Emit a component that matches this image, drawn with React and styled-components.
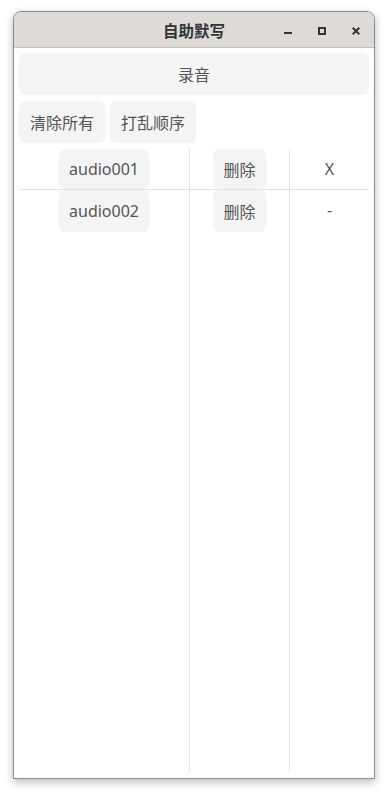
import React from "react"
import styled, { createGlobalStyle } from "styled-components"

const GlobalStyle = createGlobalStyle`
  html, body {
    margin: 0;
    padding: 0;
    background: #ffffff;
  }
  body {
    font-family: "Noto Sans", "Noto Sans CJK SC", sans-serif;
  }
`

const Desktop = styled.div`
  padding: 11px 0 0 13px;
  height: 796px;
  box-sizing: border-box;
`

const Window = styled.div`
  width: 362px;
  height: 768px;
  box-sizing: border-box;
  display: flex;
  flex-direction: column;
  background: #ffffff;
  border: 1px solid #8c8c8c;
  border-radius: 8px 8px 0 0;
  box-shadow: 0 3px 9px rgba(0, 0, 0, 0.28);
  overflow: hidden;
`

const TitleBar = styled.div`
  position: relative;
  height: 35px;
  flex-shrink: 0;
  display: flex;
  align-items: center;
  justify-content: center;
  background: #dedbd7;
  border-bottom: 1px solid #c4bfba;
`

const Title = styled.div`
  font-family: "Noto Sans CJK SC", "Noto Sans", sans-serif;
  font-weight: 700;
  font-size: 15.5px;
  color: #2e3436;
`

const Controls = styled.div`
  position: absolute;
  right: 14px;
  top: 1px;
  height: 100%;
  display: flex;
  align-items: center;
  gap: 26px;
`

const ControlIcon = styled.svg`
  width: 8px;
  height: 8px;
  display: block;
  color: #2e3436;
`

const Content = styled.div`
  flex: 1;
  display: flex;
  flex-direction: column;
  gap: 6px;
  padding: 5px;
  min-height: 0;
`

const Button = styled.button`
  font-family: "Noto Sans", "Noto Sans CJK SC", sans-serif;
  font-size: 16px;
  color: #555555;
  background: #f4f4f4;
  border: none;
  border-radius: 6px;
  height: ${props => props.$height || 42}px;
  padding: 0 ${props => props.$pad || 11}px;
  margin: 0;
  cursor: pointer;
  width: ${props => (props.$wide ? "100%" : "auto")};
  flex-shrink: 0;
  &:hover {
    background: #ececec;
  }
`

const ButtonRow = styled.div`
  display: flex;
  gap: 5px;
`

const Table = styled.div`
  flex: 1;
  display: grid;
  grid-template-columns: 171px 100px 79px;
  grid-template-rows: 41px 42px 1fr;
  margin-bottom: 1px;
`

const Cell = styled.div`
  display: flex;
  align-items: flex-start;
  justify-content: center;
  border-right: ${props => (props.$last ? "none" : "1px solid #e2e2e2")};
  border-bottom: ${props => (props.$lined ? "1px solid #e2e2e2" : "none")};
  font-size: 16px;
  color: #555555;
`

const Status = styled.span`
  line-height: 40px;
`

const rows = [
  { name: "audio001", status: "X" },
  { name: "audio002", status: "-" }
]

function Minimize() {
  return (
    <ControlIcon viewBox="0 0 8 8">
      <rect x="0" y="5" width="8" height="2" fill="currentColor" />
    </ControlIcon>
  )
}

function Maximize() {
  return (
    <ControlIcon viewBox="0 0 8 8">
      <rect x="1" y="1" width="6" height="6" fill="none" stroke="currentColor" strokeWidth="2" />
    </ControlIcon>
  )
}

function Close() {
  return (
    <ControlIcon viewBox="0 0 8 8">
      <path d="M0.7 0.7 L7.3 7.3 M7.3 0.7 L0.7 7.3" stroke="currentColor" strokeWidth="2" />
    </ControlIcon>
  )
}

export default function App() {
  return (
    <Desktop>
      <GlobalStyle />
      <Window>
        <TitleBar>
          <Title>自助默写</Title>
          <Controls>
            <Minimize />
            <Maximize />
            <Close />
          </Controls>
        </TitleBar>
        <Content>
          <Button $wide>录音</Button>
          <ButtonRow>
            <Button>清除所有</Button>
            <Button>打乱顺序</Button>
          </ButtonRow>
          <Table>
            {rows.map((row, i) => (
              <React.Fragment key={row.name}>
                <Cell $lined={i === 0}>
                  <Button $height={i === 0 ? 40 : 42} $pad={10}>{row.name}</Button>
                </Cell>
                <Cell $lined={i === 0}>
                  <Button $height={i === 0 ? 40 : 42} $pad={10}>删除</Button>
                </Cell>
                <Cell $lined={i === 0} $last>
                  <Status>{row.status}</Status>
                </Cell>
              </React.Fragment>
            ))}
            <Cell />
            <Cell />
            <Cell $last />
          </Table>
        </Content>
      </Window>
    </Desktop>
  )
}
